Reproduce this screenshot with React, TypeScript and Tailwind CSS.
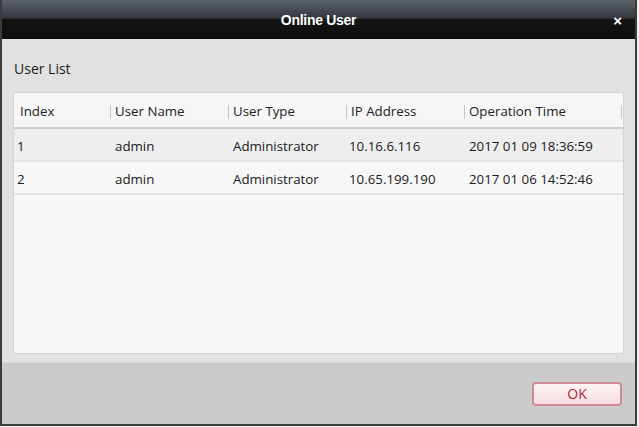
const columns = [
  { label: 'Index', width: 'w-[96px]' },
  { label: 'User Name', width: 'w-[118px]' },
  { label: 'User Type', width: 'w-[118px]' },
  { label: 'IP Address', width: 'w-[118px]' },
  { label: 'Operation Time', width: 'w-[157px]' },
]

const users = [
  ['1', 'admin', 'Administrator', '10.16.6.116', '2017 01 09 18:36:59'],
  ['2', 'admin', 'Administrator', '10.65.199.190', '2017 01 06 14:52:46'],
]

export default function App() {
  return (
    <div className="h-[427px] w-[639px] bg-[#f0f0f0] font-['Open_Sans',sans-serif]">
      <div className="flex h-[426px] w-[637px] flex-col border-2 border-[#3c3c3c] border-t-0">
        {/* title bar */}
        <div className="relative flex h-[39px] items-center justify-center bg-[linear-gradient(#5c636b_0%,#33383e_46%,#141414_50%,#0e0e0e_100%)]">
          <span className="mt-[2px] font-['Liberation_Sans',sans-serif] text-[14px] font-bold tracking-[-0.3px] text-white">
            Online User
          </span>
          <span className="absolute right-[13px] top-[10px] font-['Liberation_Sans',sans-serif] text-[15px] font-bold text-white">
            ×
          </span>
        </div>

        <div className="flex flex-1 flex-col bg-[#e1e1e1] px-[11px] pb-[8px]">
          <div className="pt-[20px] pb-[14px] pl-[1px] text-[14px] leading-[19px] text-[#1a1a1a]">User List</div>

          <div className="flex-1 border border-[#d4d4d4] bg-[#f6f6f6]">
            <div className="flex h-[36px] items-center border-b-2 border-[#cdcdcd] pt-[4px] text-[13.3px] text-[#222]">
              {columns.map((c, i) => (
                <div key={c.label} className={`flex items-center ${c.width}`}>
                  {i > 0 && <span className="mr-[4px] h-[14px] w-px bg-[#c4c4c4]" />}
                  <span className={i === 0 ? 'pl-[6px]' : ''}>{c.label}</span>
                </div>
              ))}
              <span className="h-[14px] w-px bg-[#c4c4c4]" />
            </div>
            {users.map((row, r) => (
              <div
                key={r}
                className={`flex h-[33px] items-center border-b-2 border-[#e4e4e4] pt-[4px] text-[13.3px] text-[#1a1a1a] ${r === 0 ? 'bg-[#eeeeee]' : 'bg-[#f7f7f7]'}`}
              >
                {row.map((cell, i) => (
                  <div key={i} className={`${columns[i].width} ${i === 0 ? 'pl-[3px]' : i === 3 ? 'pl-[3px]' : 'pl-[5px]'}`}>
                    {cell}
                  </div>
                ))}
              </div>
            ))}
          </div>
        </div>

        {/* footer */}
        <div className="flex h-[62px] items-center justify-end border-t border-[#d6d6d6] bg-[#cbcbcb] pr-[13px]">
          <button className="h-[24px] w-[90px] rounded-[4px] border-2 border-[#cf8a94] bg-[linear-gradient(#fdf4f5,#f6dde0)] text-[14px] leading-none text-[#a52a3c]">
            OK
          </button>
        </div>
      </div>
    </div>
  )
}
